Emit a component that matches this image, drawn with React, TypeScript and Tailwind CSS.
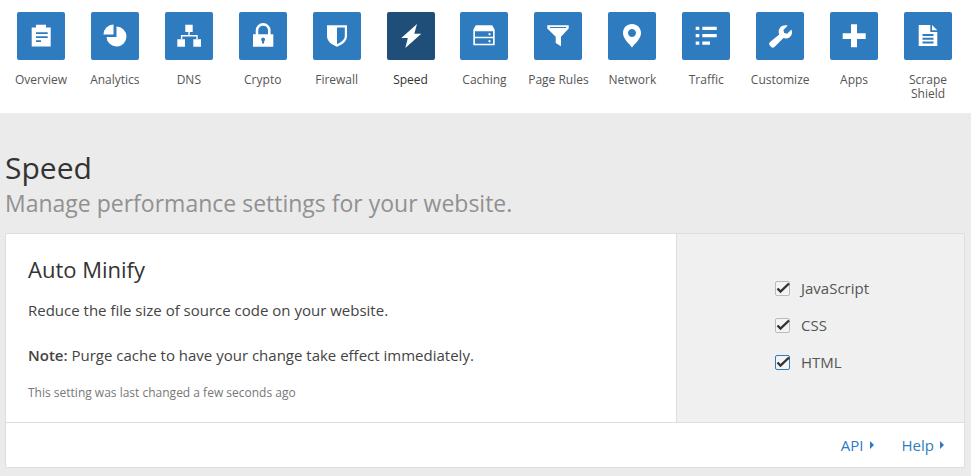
import { ReactNode } from "react";

// icon drawings, all on the 48x48 tile
const icons: Record<string, ReactNode> = {
  overview: (
    <path fillRule="evenodd" d="M14.700 15.500h4.300v-2.800h10v2.800h4.700v19h-19zM19 20.300v1.800h11.700v-1.800zM19 24.300v1.800h11.700v-1.800zM19 28.300v1.800h5v-1.800z" />
  ),
  analytics: (
    <>
      <path d="M22.500 12.500A10 10 0 0 0 12.500 22.500H22.500z" />
      <path d="M25.500 14.500A10 10 0 1 1 15.500 25H25.500z" />
    </>
  ),
  dns: (
    <>
      <path d="M20.300 12.700h7.400v7.300h-7.400zM12.300 27.300h7.700v7.400h-7.700zM28.300 27.300h7.700v7.400h-7.700z" />
      <path d="M23.300 20h1.400v3h8v4.300h-1.400v-2.900H17.300v2.900h-1.400V23h7.400z" />
    </>
  ),
  crypto: (
    <>
      <path fillRule="evenodd" d="M14 22.300h20.300v12.400H14zM24.100 25.500a2 2 0 0 0-1 3.700v2.300h2v-2.300a2 2 0 0 0-1-3.700z" />
      <path d="M18 23v-4.500a6.100 6.100 0 0 1 12.300 0V23" fill="none" stroke="#fff" strokeWidth="2.600" />
    </>
  ),
  firewall: (
    <path fillRule="evenodd" d="M14 13.300h20v10.700c0 5-4.200 8.500-10 10.700-5.800-2.200-10-5.700-10-10.700zM24 15.500v16.700c4-1.800 7.800-4.400 7.800-8.200v-8.500z" />
  ),
  speed: <path d="M30 12 14.300 26h6.500L18.300 36 34.300 21.700h-7z" />,
  caching: (
    <path fillRule="evenodd" d="M17 13.300h14c1 0 1.500.5 2 1.200l1.700 3.300v15.500h-21.400V17.800l1.700-3.300c.5-.7 1-1.200 2-1.200zM15 19.300v5.500h18v-5.500zM15 26.300v5.500h18v-5.500zM29.500 21a1.100 1.100 0 1 0 .01 0zM29.500 28a1.100 1.100 0 1 0 .01 0z" />
  ),
  pagerules: (
    <path fillRule="evenodd" d="M13.300 13.300h21.400v3.200l-7.700 8.200v9.600l-5.300-3.200v-6.400l-8.400-8.200zM15.500 15l.9 1h15.200l.9-1z" />
  ),
  network: (
    <path fillRule="evenodd" d="M24 12c-5 0-9 3.800-9 9 0 5.500 5.500 10 9 14.500 3.500-4.500 9-9 9-14.500 0-5.200-4-9-9-9zM24 17a4 4 0 1 1-.01 0z" />
  ),
  traffic: (
    <path d="M13.700 14.700h3.600V18h-3.600zM20.300 14.700h14.400V18H20.300zM13.700 22h3.600v3.300h-3.600zM20.300 22h14.400v3.300H20.300zM13.700 29.400h3.600v3.300h-3.600zM20.300 29.400H28v3.300h-7.700z" />
  ),
  customize: (
    <path d="M35.500 17.500l-4.300 4.200-3-.8-.8-3 4.300-4.200c-3-.9-6.500 0-8 2.500-1.300 2-1.300 4.300-.5 6.200L14 30a2.600 2.600 0 0 0 0 3.700l1 1a2.600 2.600 0 0 0 3.700 0l8.700-8.700c2 .8 4.300.6 6.200-.7 2.300-1.700 3.200-4.500 1.900-7.800z" />
  ),
  apps: <path d="M21 12.300h6v9h8.700v5.700H27v8.300h-6V27h-8.300v-5.700H21z" />,
  shield: (
    <path fillRule="evenodd" d="M14.700 13h11.600v7h7v14H14.700zM28 13l5.300 5.300H28zM18.500 22v2h11v-2zM18.500 25.700v2h11v-2zM18.500 29.400v2h11v-2z" />
  ),
};

const navItems = [
  { label: "Overview", icon: "overview" },
  { label: "Analytics", icon: "analytics" },
  { label: "DNS", icon: "dns" },
  { label: "Crypto", icon: "crypto" },
  { label: "Firewall", icon: "firewall" },
  { label: "Speed", icon: "speed", active: true },
  { label: "Caching", icon: "caching" },
  { label: "Page Rules", icon: "pagerules" },
  { label: "Network", icon: "network" },
  { label: "Traffic", icon: "traffic" },
  { label: "Customize", icon: "customize" },
  { label: "Apps", icon: "apps" },
  { label: "Scrape Shield", icon: "shield" },
];

function NavItem({ label, icon, active }: { label: string; icon: string; active?: boolean }) {
  return (
    <a className="flex flex-col items-center text-center">
      <span className={`w-12 h-12 rounded-[2px] ${active ? "bg-[#1f4e79]" : "bg-[#2f7bbf]"}`}>
        <svg viewBox="0 0 48 48" className="w-12 h-12" fill="#fff">
          {icons[icon]}
        </svg>
      </span>
      <span className={`mt-[13px] px-3 -mx-3 text-[12px] leading-[14px] ${active ? "text-[#333]" : "text-[#555]"}`}>
        {label}
      </span>
    </a>
  );
}

function Check({ label, focused }: { label: string; focused?: boolean }) {
  return (
    <label className="flex items-center h-[37px]">
      <span
        className={`relative w-[15px] h-[15px] rounded-[2px] border bg-[#f4f4f4] ${
          focused ? "border-[#2f7bbf]" : "border-[#bbb]"
        }`}
      >
        <svg viewBox="0 0 15 15" className="absolute -left-px -top-px w-[15px] h-[15px] overflow-visible">
          <path d="M2.500 7.500l3 3 8.500-8" fill="none" stroke="#333" strokeWidth="2.400" />
        </svg>
      </span>
      <span className="ml-[11px] text-[15px] text-[#555]">{label}</span>
    </label>
  );
}

function Caret() {
  return <span className="ml-[6px] w-0 h-0 border-y-[4px] border-y-transparent border-l-[4px] border-l-[#2f7bbf]" />;
}

export default function App() {
  return (
    <div className="w-[971px] h-[476px] overflow-hidden bg-[#ebebeb] font-['Open_Sans',sans-serif] text-[#333]">
      <nav className="h-[113px] bg-white pt-3 pl-[4px] pr-[6px] grid grid-cols-13">
        {navItems.map((item) => (
          <NavItem key={item.label} {...item} />
        ))}
      </nav>

      <div className="pl-[5px] pr-[6px]">
        <h1 className="mt-[35px] text-[30px] leading-[40px] font-normal">Speed</h1>
        <p className="text-[23px] leading-[32px] text-[#919191] -mt-[1px]">Manage performance settings for your website.</p>

        <div className="mt-[14px] border border-[#dedede] bg-white rounded-[2px]">
          <div className="flex h-[189px] border-b border-[#dedede]">
            <div className="flex-1 px-[22px] pt-[20px]">
              <h2 className="text-[22px] leading-[30px]">Auto Minify</h2>
              <p className="mt-[15px] text-[15px] leading-[22px] text-[#444]">Reduce the file size of source code on your website.</p>
              <p className="mt-[23px] text-[15px] leading-[22px] text-[#444]">
                <strong className="font-semibold">Note:</strong> Purge cache to have your change take effect immediately.
              </p>
              <p className="mt-[18px] text-[12px] leading-[18px] text-[#777]">This setting was last changed a few seconds ago</p>
            </div>
            <div className="w-[288px] border-l border-[#dedede] bg-[#f0f0f0] pl-[98px] pb-[5px] flex flex-col justify-center">
              <Check label="JavaScript" />
              <Check label="CSS" />
              <Check label="HTML" focused />
            </div>
          </div>
          <div className="h-[44px] flex items-center justify-end pr-[20px] text-[15px] text-[#2f7bbf]">
            <a className="flex items-center">API<Caret /></a>
            <a className="flex items-center ml-[28px]">Help<Caret /></a>
          </div>
        </div>
      </div>
    </div>
  );
}
